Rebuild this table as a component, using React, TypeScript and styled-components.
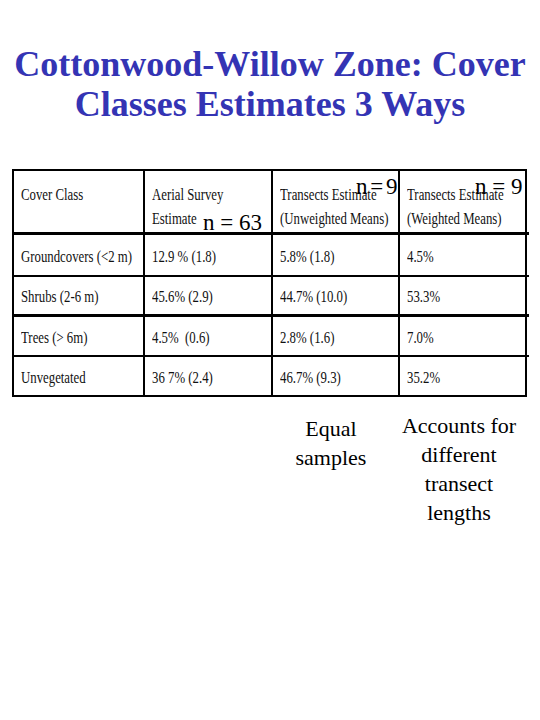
import React from "react";
import styled, { createGlobalStyle } from "styled-components";

const GlobalStyle = createGlobalStyle`
  html, body {
    margin: 0;
    padding: 0;
    background: #ffffff;
  }
`;

const serif = `"Liberation Serif", "Times New Roman", serif`;

const Slide = styled.div`
  width: 540px;
  height: 720px;
  background: #ffffff;
  font-family: ${serif};
  color: #000;
  display: flex;
  flex-direction: column;
  align-items: center;
`;

const Title = styled.h1`
  margin: 44px 0 0 0;
  width: 540px;
  text-align: center;
  font-family: ${serif};
  font-size: 36px;
  line-height: 40px;
  font-weight: bold;
  color: #3434b4;
`;

const TableWrap = styled.div`
  position: relative;
  margin: 45px 0 0 12px;
  align-self: flex-start;
`;

const Grid = styled.div`
  display: grid;
  grid-template-columns: 131px 128px 127px 129px;
  grid-template-rows: 64px 42px 40px 40px 38px;
  border: 2px solid #000;
  box-sizing: border-box;
  width: 515px;
  font-family: ${serif};
  font-size: 16px;
  color: #111;
`;

const Cell = styled.div<{ $last?: boolean; $head?: boolean; $thick?: boolean }>`
  box-sizing: border-box;
  border-right: ${(p) => (p.$last ? "none" : "2px solid #000")};
  border-bottom: ${(p) => (p.$thick ? "3px" : "2px")} solid #000;
  padding: ${(p) => (p.$head ? "12px 0 0 7px" : "3px 0 0 7px")};
  display: flex;
  flex-direction: column;
  align-items: flex-start;
  justify-content: ${(p) => (p.$head ? "flex-start" : "center")};
  line-height: 24px;
  white-space: nowrap;
  overflow: hidden;

  &:nth-last-child(-n + 4) {
    border-bottom: none;
  }
`;

/* the scanned table uses a narrow typeface */
const Narrow = styled.span`
  display: inline-block;
  transform: scaleX(0.8);
  transform-origin: left center;
  white-space: pre;
`;

const NLabel = styled.span<{ $x: number; $y: number; $tight?: boolean }>`
  position: absolute;
  left: ${(p) => p.$x}px;
  top: ${(p) => p.$y}px;
  font-family: ${serif};
  font-size: 23px;
  line-height: 23px;
  letter-spacing: ${(p) => (p.$tight ? "-1.5px" : "0")};
  color: #000;
  white-space: nowrap;
`;

const Notes = styled.div`
  display: flex;
  align-self: flex-start;
  align-items: flex-start;
  margin: 14px 0 0 290px;
  gap: 22px;
`;

const Note = styled.div<{ $w: number; $top?: number }>`
  width: ${(p) => p.$w}px;
  margin-top: ${(p) => p.$top ?? 0}px;
  font-family: ${serif};
  font-size: 22px;
  line-height: 29px;
  text-align: center;
  color: #000;
`;

const header = [
  ["Cover Class"],
  ["Aerial Survey", "Estimate"],
  ["Transects Estimate", "(Unweighted Means)"],
  ["Transects Estimate", "(Weighted Means)"],
];

const rows = [
  ["Groundcovers (<2 m)", "12.9 % (1.8)", "5.8% (1.8)", "4.5%"],
  ["Shrubs (2-6 m)", "45.6% (2.9)", "44.7% (10.0)", "53.3%"],
  ["Trees (> 6m)", "4.5%  (0.6)", "2.8% (1.6)", "7.0%"],
  ["Unvegetated", "36 7% (2.4)", "46.7% (9.3)", "35.2%"],
];

export default function App() {
  return (
    <Slide>
      <GlobalStyle />
      <Title>
        Cottonwood-Willow Zone: Cover
        <br />
        Classes Estimates 3 Ways
      </Title>

      <TableWrap>
        <Grid>
          {header.map((lines, i) => (
            <Cell key={"h" + i} $head $thick $last={i === 3}>
              {lines.map((l) => (
                <Narrow key={l}>{l}</Narrow>
              ))}
            </Cell>
          ))}
          {rows.map((r, ri) =>
            r.map((v, ci) => (
              <Cell key={ri + "-" + ci} $last={ci === 3} $thick={ri === 1}>
                <Narrow>{v}</Narrow>
              </Cell>
            ))
          )}
        </Grid>
        <NLabel $x={191} $y={42}>n = 63</NLabel>
        <NLabel $x={344} $y={6} $tight>n = 9</NLabel>
        <NLabel $x={463} $y={6}>n = 9</NLabel>
      </TableWrap>

      <Notes>
        <Note $w={82} $top={3}>
          Equal
          <br />
          samples
        </Note>
        <Note $w={130}>
          Accounts for
          <br />
          different
          <br />
          transect
          <br />
          lengths
        </Note>
      </Notes>
    </Slide>
  );
}
